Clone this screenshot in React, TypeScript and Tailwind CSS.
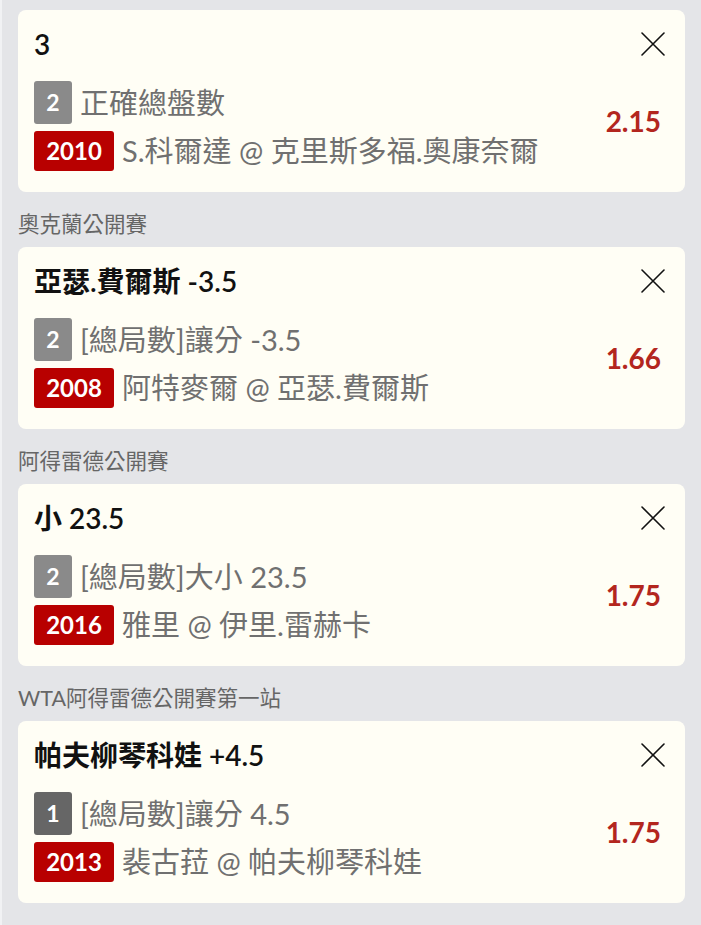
import React from "react";

type Bet = {
  league?: string;
  title: string;
  num: string;
  numDark?: boolean;
  market: string;
  year: string;
  match: string;
  odds: string;
};

const bets: Bet[] = [
  { title: "3", num: "2", market: "正確總盤數", year: "2010", match: "S.科爾達 @ 克里斯多福.奧康奈爾", odds: "2.15" },
  { league: "奧克蘭公開賽", title: "亞瑟.費爾斯 -3.5", num: "2", market: "[總局數]讓分 -3.5", year: "2008", match: "阿特麥爾 @ 亞瑟.費爾斯", odds: "1.66" },
  { league: "阿得雷德公開賽", title: "小 23.5", num: "2", market: "[總局數]大小 23.5", year: "2016", match: "雅里 @ 伊里.雷赫卡", odds: "1.75" },
  { league: "WTA阿得雷德公開賽第一站", title: "帕夫柳琴科娃 +4.5", num: "1", numDark: true, market: "[總局數]讓分 4.5", year: "2013", match: "裴古菈 @ 帕夫柳琴科娃", odds: "1.75" },
];

function CloseIcon() {
  return (
    <svg width="24" height="24" viewBox="0 0 24 24" fill="none" stroke="#111" strokeWidth="1.6" strokeLinecap="round">
      <path d="M1 1 L23 23 M23 1 L1 23" />
    </svg>
  );
}

function Card({ b }: { b: Bet }) {
  return (
    <div className="bg-[#fffef5] rounded-lg pl-4 pr-5 pt-[18px] pb-[21px] flex flex-col">
      <div className="h-[32px] flex items-center justify-between">
        <div className="text-[28px] leading-[32px] font-semibold text-[#111] whitespace-nowrap">{b.title}</div>
        <CloseIcon />
      </div>
      <div className="mt-[21px] flex items-center justify-between">
        <div className="flex flex-col gap-[7px]">
          <div className="h-[43px] flex items-center gap-[8px]">
            <div
              className={
                "w-[38px] h-[43px] rounded-[3px] flex items-center justify-center text-white font-bold text-[23px] " +
                (b.numDark ? "bg-[#666666]" : "bg-[#8a8a8a]")
              }
            >
              {b.num}
            </div>
            <div className="text-[29px] leading-[36px] text-[#707070] whitespace-nowrap">{b.market}</div>
          </div>
          <div className="h-[40px] flex items-center gap-[8px]">
            <div className="w-[80px] h-[40px] rounded-[3px] bg-[#b80000] flex items-center justify-center text-white font-bold text-[24px]">
              {b.year}
            </div>
            <div className="text-[29px] leading-[36px] text-[#707070] whitespace-nowrap">{b.match}</div>
          </div>
        </div>
        <div className="mb-[10px] pr-1 text-[28px] leading-[34px] font-bold text-[#b3261e]">{b.odds}</div>
      </div>
    </div>
  );
}

export default function App() {
  return (
    <div
      className="min-h-screen bg-[#e4e5e8] border-l-2 border-[#f1f2f4] pl-4 pr-4 pt-[10px] pb-[23px]"
      style={{ fontFamily: "Lato, 'Noto Sans CJK TC', sans-serif" }}
    >
      {bets.map((b, i) => (
        <div key={i}>
          {b.league && (
            <div className="pt-[20px] pb-[11px] text-[21.5px] leading-[24px] text-[#666666] whitespace-nowrap">{b.league}</div>
          )}
          <Card b={b} />
        </div>
      ))}
    </div>
  );
}
